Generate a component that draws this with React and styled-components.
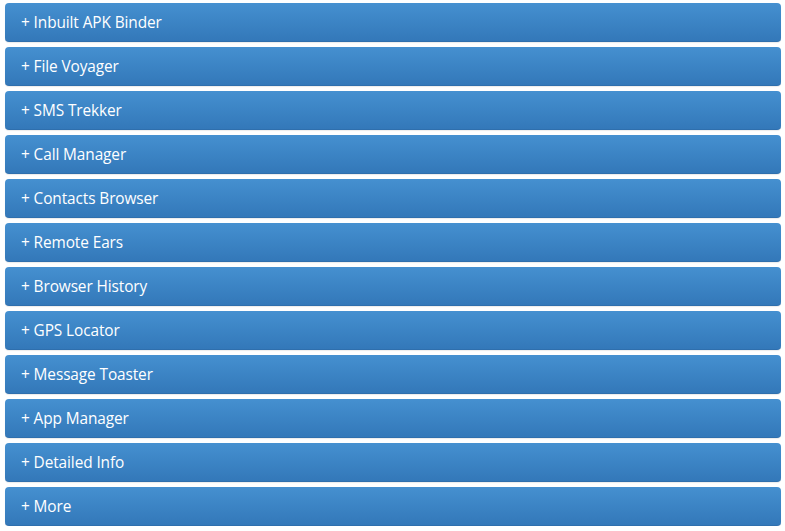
import styled, { createGlobalStyle } from 'styled-components';

const GlobalStyle = createGlobalStyle`
    body {
        margin: 0;
        background: #ffffff;
        font-family: 'Open Sans', 'Liberation Sans', sans-serif;
    }
`;

const FEATURES = [
    'Inbuilt APK Binder',
    'File Voyager',
    'SMS Trekker',
    'Call Manager',
    'Contacts Browser',
    'Remote Ears',
    'Browser History',
    'GPS Locator',
    'Message Toaster',
    'App Manager',
    'Detailed Info',
    'More'
];

const App = () => (
    <>
        <GlobalStyle />
        <List>
            {FEATURES.map((name) => (
                <Panel key={name}>
                    <Title>+ {name}</Title>
                </Panel>
            ))}
        </List>
    </>
);

export default App;

const List = styled.div`
    display: flex;
    flex-direction: column;
    gap: 5px;
    width: 776px;
    padding: 3px 0 0 5px;
`;

const Panel = styled.div`
    height: 39px;
    display: flex;
    align-items: center;
    padding: 2px 16px 0;
    box-sizing: border-box;
    border-radius: 4px;
    background: linear-gradient(to bottom, #4590d0 0%, #3378b9 100%);
    border-bottom: 1px solid #2f6fad;
    box-shadow: 0 1px 1px rgba(0, 0, 0, 0.08);
    cursor: pointer;
`;

const Title = styled.span`
    color: #ffffff;
    font-size: 15.4px;
    letter-spacing: -0.1px;
    line-height: 1;
`;
